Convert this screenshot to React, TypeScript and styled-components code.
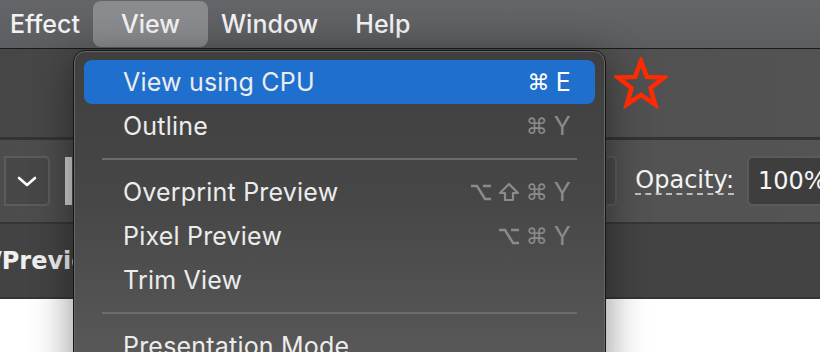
import React from 'react';
import styled, { createGlobalStyle } from 'styled-components';

const GlobalStyle = createGlobalStyle`
  html, body {
    margin: 0;
    padding: 0;
    background: #ffffff;
    overflow: hidden;
  }
  body {
    font-family: Inter, "Noto Sans", sans-serif;
  }
`;

const Screen = styled.div`
  position: relative;
  width: 820px;
  height: 352px;
  display: flex;
  flex-direction: column;
  overflow: hidden;
`;

const MenuBar = styled.div`
  height: 48px;
  flex-shrink: 0;
  display: flex;
  align-items: center;
  gap: 13px;
  padding-left: 10px;
  background: linear-gradient(#646568, #5c5d60);
  border-bottom: 1px solid #1b1b1b;
`;

const MenuTitle = styled.div<{ $open?: boolean; $wide?: boolean }>`
  height: 46px;
  display: flex;
  align-items: center;
  padding: 0 ${(p) => (p.$open ? '28px' : '0')};
  margin-left: ${(p) => (p.$wide ? '24px' : '0')};
  border-radius: 8px;
  background: ${(p) => (p.$open ? '#8a8b8e' : 'transparent')};
  color: #f2f2f2;
  font-size: 25px;
  font-weight: 500;
`;

const Toolbar = styled.div`
  height: 88px;
  flex-shrink: 0;
  background: linear-gradient(90deg, #464646, #4f4f4f 60%, #535353);
  border-bottom: 3px solid #343434;
`;

const ControlBar = styled.div`
  height: 82px;
  flex-shrink: 0;
  display: flex;
  align-items: center;
  background: linear-gradient(90deg, #4c4c4c, #545454);
  border-bottom: 2px solid #363636;
`;

const Dropdown = styled.div`
  width: 42px;
  height: 46px;
  margin-left: 4px;
  display: flex;
  align-items: center;
  justify-content: center;
  background: #474747;
  border: 2px solid #5c5c5c;
  border-radius: 0 5px 5px 0;
`;

const Swatch = styled.div`
  width: 7px;
  height: 48px;
  margin-left: 15px;
  background: #cfcfcf;
`;

const Spacer = styled.div`
  flex: 1;
`;

const BoxEdge = styled.div`
  width: 8px;
  height: 46px;
  border: 2px solid #5c5c5c;
  border-left: none;
  border-radius: 0 5px 5px 0;
  background: #4a4a4a;
  margin-right: 18px;
`;

const Label = styled.span`
  font-family: "DejaVu Sans", Verdana, sans-serif;
  font-size: 24px;
  color: #f4f4f4;
  border-bottom: 2px dashed #bdbdbd;
  line-height: 26px;
  margin-right: 13px;
`;

const Input = styled.div`
  width: 90px;
  height: 46px;
  display: flex;
  align-items: center;
  padding-left: 9px;
  background: #3e3e3e;
  border: 2px solid #5a5a5a;
  border-radius: 6px;
  font-family: "DejaVu Sans", Verdana, sans-serif;
  font-size: 24px;
  color: #f6f6f6;
  margin-right: -30px;
`;

const TabBar = styled.div`
  height: 73px;
  flex-shrink: 0;
  display: flex;
  align-items: center;
  background: #434343;
  border-bottom: 2px solid #353535;
`;

const TabTitle = styled.span`
  margin-left: -7px;
  font-family: "DejaVu Sans", Verdana, sans-serif;
  font-weight: bold;
  font-size: 24px;
  color: #f0f0f0;
  white-space: nowrap;
`;

const Canvas = styled.div`
  flex: 1;
  background: #ffffff;
`;

const Menu = styled.div`
  position: absolute;
  left: 73px;
  top: 50px;
  width: 533px;
  height: 340px;
  padding: 9px 10px;
  box-sizing: border-box;
  background: linear-gradient(#3f3f3f, #474747 45%, #5c5c5c);
  border: 1px solid #151515;
  border-radius: 12px;
  box-shadow: inset 0 0 0 1px #676767, 0 8px 40px rgba(0, 0, 0, 0.45);
  display: flex;
  flex-direction: column;
`;

const Item = styled.div<{ $active?: boolean }>`
  height: 44px;
  flex-shrink: 0;
  display: flex;
  align-items: center;
  justify-content: space-between;
  padding: 0 24px 0 39px;
  border-radius: 8px;
  background: ${(p) => (p.$active ? '#1f6fcf' : 'transparent')};
  color: #ececec;
  font-size: 25px;
  font-weight: 400;
  letter-spacing: 0.2px;
`;

const Shortcut = styled.span<{ $active?: boolean }>`
  display: flex;
  gap: 6px;
  align-items: center;
  color: ${(p) => (p.$active ? '#ffffff' : '#8b8b8b')};
  font-size: 25px;
`;

const Mod = styled.span`
  font-family: "DejaVu Sans", sans-serif;
  font-size: 22px;
`;

const ModIcon = styled.svg`
  display: block;
`;

const Separator = styled.div`
  height: 22px;
  flex-shrink: 0;
  display: flex;
  align-items: center;
  padding: 0 18px;
  &::after {
    content: '';
    flex: 1;
    height: 2px;
    background: #6c6c6c;
  }
`;

const Star = styled.svg`
  position: absolute;
  left: 614px;
  top: 57px;
`;

type Entry =
  | { kind: 'item'; label: string; mods?: string[]; key?: string; active?: boolean }
  | { kind: 'sep' };

const entries: Entry[] = [
  { kind: 'item', label: 'View using CPU', mods: ['cmd'], key: 'E', active: true },
  { kind: 'item', label: 'Outline', mods: ['cmd'], key: 'Y' },
  { kind: 'sep' },
  { kind: 'item', label: 'Overprint Preview', mods: ['opt', 'shift', 'cmd'], key: 'Y' },
  { kind: 'item', label: 'Pixel Preview', mods: ['opt', 'cmd'], key: 'Y' },
  { kind: 'item', label: 'Trim View' },
  { kind: 'sep' },
  { kind: 'item', label: 'Presentation Mode' },
];

function Modifier({ name }: { name: string }) {
  if (name === 'opt') {
    return (
      <ModIcon width="22" height="20" viewBox="0 0 22 20">
        <path d="M1 4 H7 L15 17 H21 M13 4 H21" fill="none" stroke="currentColor" strokeWidth="2.4" />
      </ModIcon>
    );
  }
  if (name === 'shift') {
    return (
      <ModIcon width="22" height="20" viewBox="0 0 22 20">
        <path d="M11 2 L20 11 H15 V18 H7 V11 H2 Z" fill="none" stroke="currentColor" strokeWidth="2.2" strokeLinejoin="round" />
      </ModIcon>
    );
  }
  return <Mod>⌘</Mod>;
}

function starPoints(cx: number, cy: number, outer: number, inner: number) {
  const pts: string[] = [];
  for (let i = 0; i < 10; i++) {
    const r = i % 2 === 0 ? outer : inner;
    const a = (Math.PI / 5) * i - Math.PI / 2;
    pts.push(`${(cx + r * Math.cos(a)).toFixed(1)},${(cy + r * Math.sin(a)).toFixed(1)}`);
  }
  return pts.join(' ');
}

function App() {
  return (
    <Screen>
      <GlobalStyle />
      <MenuBar>
        <MenuTitle>Effect</MenuTitle>
        <MenuTitle $open>View</MenuTitle>
        <MenuTitle>Window</MenuTitle>
        <MenuTitle $wide>Help</MenuTitle>
      </MenuBar>
      <Toolbar />
      <ControlBar>
        <Dropdown>
          <svg width="20" height="11" viewBox="0 0 20 11">
            <path d="M2 2 L10 9 L18 2" fill="none" stroke="#ffffff" strokeWidth="2.6" strokeLinecap="round" strokeLinejoin="round" />
          </svg>
        </Dropdown>
        <Swatch />
        <Spacer />
        <BoxEdge />
        <Label>Opacity:</Label>
        <Input>100%</Input>
      </ControlBar>
      <TabBar>
        <TabTitle>/Preview) ×</TabTitle>
      </TabBar>
      <Canvas />

      <Menu>
        {entries.map((e, i) =>
          e.kind === 'sep' ? (
            <Separator key={i} />
          ) : (
            <Item key={i} $active={e.active}>
              <span>{e.label}</span>
              {e.key && (
                <Shortcut $active={e.active}>
                  {e.mods?.map((m, j) => <Modifier key={j} name={m} />)}
                  <span>{e.key}</span>
                </Shortcut>
              )}
            </Item>
          )
        )}
      </Menu>

      <Star width="54" height="52" viewBox="0 0 54 52">
        <polygon points={starPoints(27, 28, 24, 10)} fill="none" stroke="#ff2a00" strokeWidth="4.5" strokeLinejoin="miter" />
      </Star>
    </Screen>
  );
}

export default App;
